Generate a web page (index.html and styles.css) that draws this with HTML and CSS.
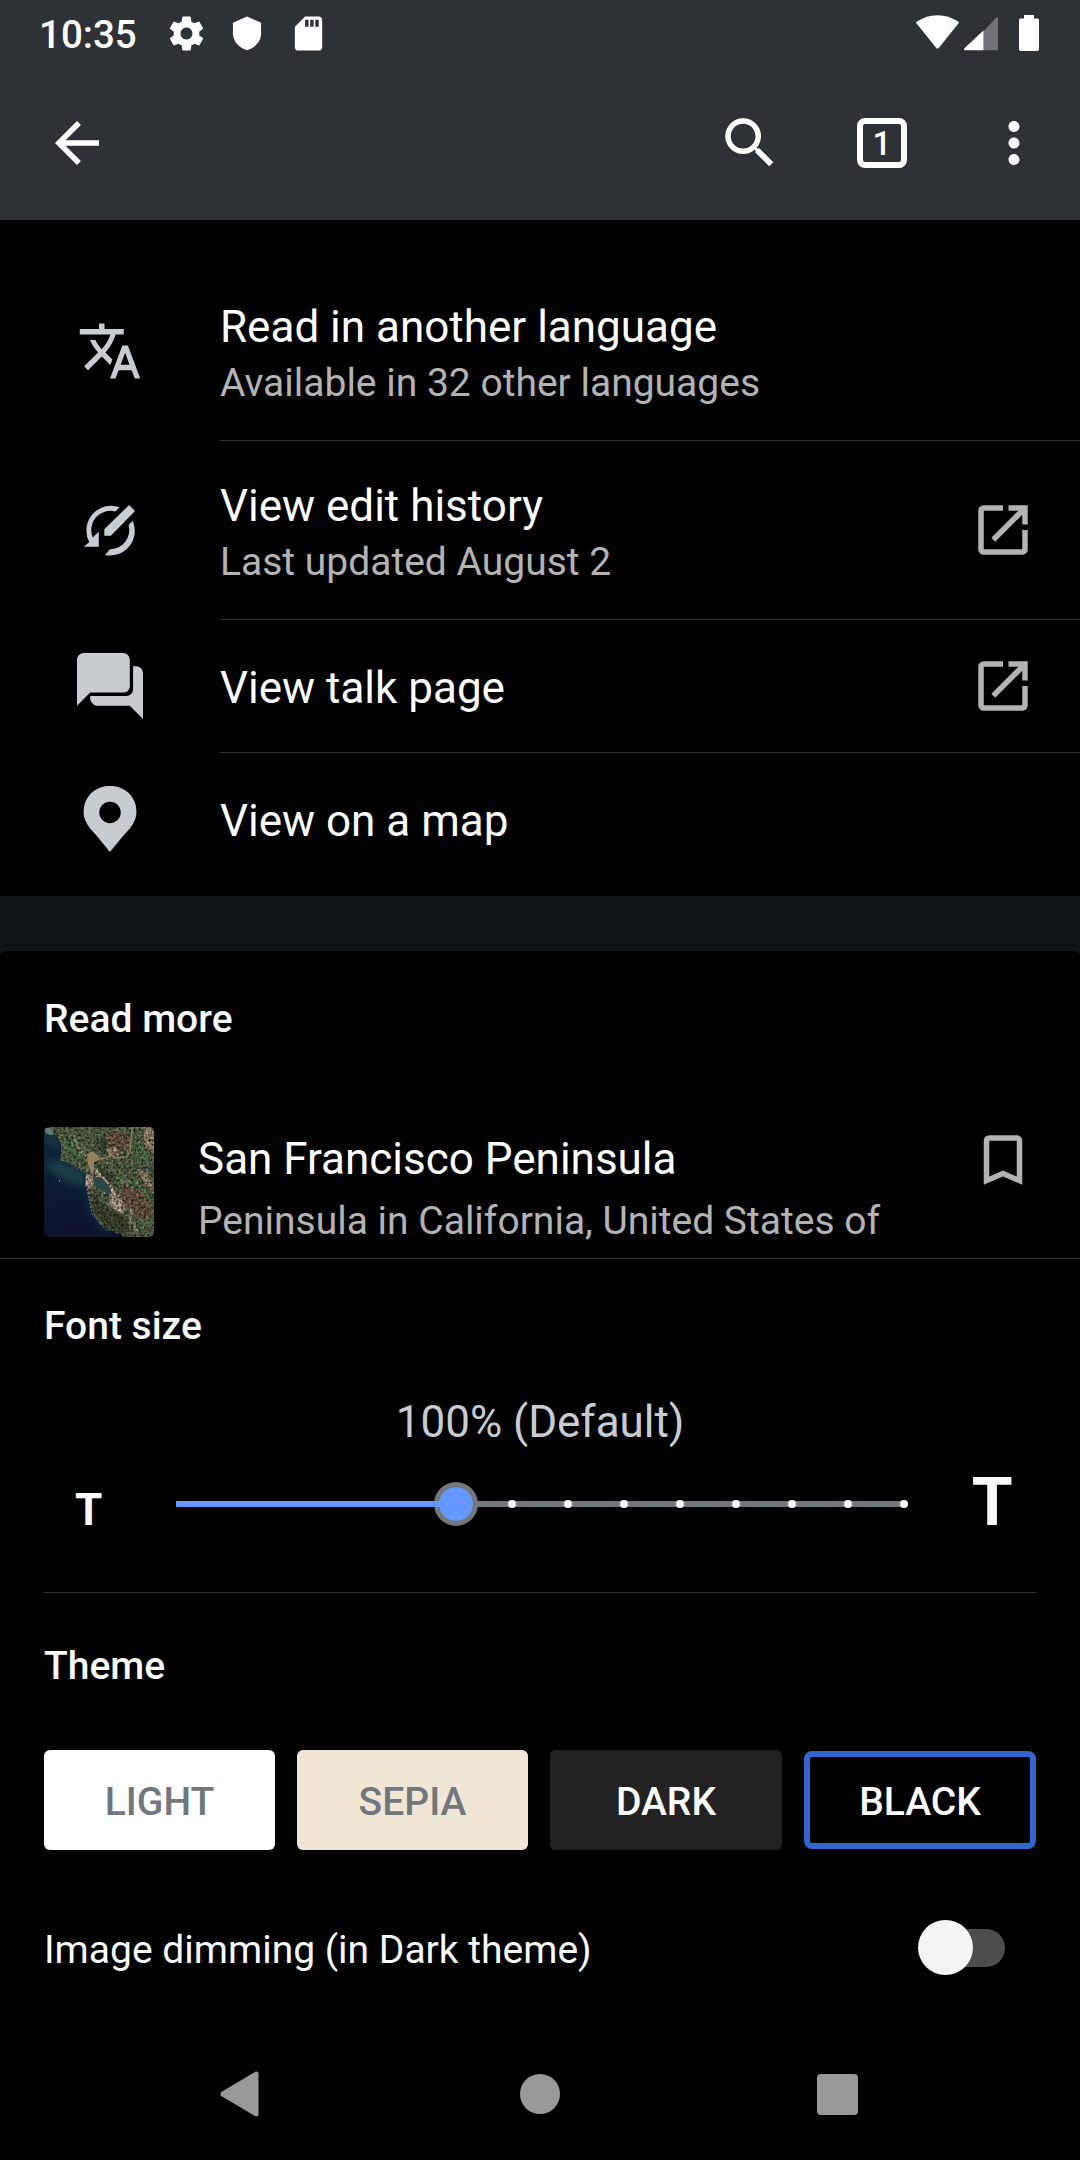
FILE: index.html
```html
<!DOCTYPE html>
<html lang="en">
<head>
<meta charset="utf-8">
<title>Article footer and theme settings</title>
<link rel="stylesheet" href="styles.css">
</head>
<body>
<div class="screen">
  <header class="top">
    <div class="status">
      <span class="clock">10:35</span>
      <svg class="st-gear" viewBox="0 0 24 24"><path d="M19.43 12.98c.04-.32.07-.64.07-.98s-.03-.66-.07-.98l2.11-1.65c.19-.15.24-.42.12-.64l-2-3.46c-.12-.22-.39-.3-.61-.22l-2.49 1c-.52-.4-1.08-.73-1.69-.98l-.38-2.65A.488.488 0 0 0 14 2h-4c-.25 0-.46.18-.49.42l-.38 2.65c-.61.25-1.17.59-1.69.98l-2.49-1c-.23-.09-.49 0-.61.22l-2 3.46c-.13.22-.07.49.12.64l2.11 1.65c-.04.32-.07.65-.07.98s.03.66.07.98l-2.11 1.65c-.19.15-.24.42-.12.64l2 3.46c.12.22.39.3.61.22l2.49-1c.52.4 1.08.73 1.69.98l.38 2.65c.03.24.24.42.49.42h4c.25 0 .46-.18.49-.42l.38-2.65c.61-.25 1.17-.59 1.69-.98l2.49 1c.23.09.49 0 .61-.22l2-3.46c.12-.22.07-.49-.12-.64l-2.11-1.65zM12 15.5c-1.93 0-3.5-1.57-3.5-3.5s1.57-3.500 3.500-3.500 3.500 1.570 3.500 3.500-1.570 3.500-3.500 3.500z"/></svg>
      <svg class="st-shield" viewBox="0 0 30 36"><path d="M15 0.500 29.500 7v11c0 8-6.500 15-14.500 17.200C7 33 .5 26 .5 18V7z"/></svg>
      <svg class="st-sd" viewBox="0 0 24 24"><path d="M18 2h-8L4.020 8 4 20c0 1.100.9 2 2 2h12c1.100 0 2-.9 2-2V4c0-1.100-.9-2-2-2zm-6 6h-2V4h2v4zm3 0h-2V4h2v4zm3 0h-2V4h2v4z"/></svg>
      <svg class="st-wifi" viewBox="0 0 43 34"><path d="M.8 8.800C.1 8.200.1 7.200.9 6.600 7 2.400 14 .2 21.500.2S36 2.400 42.100 6.600c.8.6.8 1.600.1 2.200L22.700 33c-.6.800-1.800.8-2.400 0z"/></svg>
      <svg class="st-cell" viewBox="0 0 34 34"><path d="M34 1.500V32c0 .8-.4 1.300-1.300 1.300H19.500V14.500L31.800 1c1-1 2.200-.7 2.200.5z" opacity=".32"/><path d="M19.500 13.500v19.800H1.200c-1.200 0-1.500-1.300-.8-2z"/></svg>
      <svg class="st-batt" viewBox="0 0 20 36"><path d="M5 0h10v3.500h3.300c1 0 1.700.7 1.700 1.700v29c0 1-.7 1.700-1.700 1.700H1.700C.7 35.900 0 35.200 0 34.200v-29c0-1 .7-1.700 1.700-1.700H5z"/></svg>
    </div>
    <div class="toolbar">
      <svg class="ic" viewBox="0 0 24 24"><path d="M20 11H7.830l5.590-5.590L12 4l-8 8 8 8 1.410-1.410L7.830 13H20v-2z"/></svg>
      <span class="grow"></span>
      <svg class="ic" viewBox="0 0 24 24"><path d="M15.500 14h-.79l-.28-.27A6.471 6.471 0 0 0 16 9.500 6.500 6.500 0 1 0 9.500 16c1.610 0 3.090-.59 4.230-1.570l.27.28v.79l5 4.990L20.490 19l-4.990-5zm-6 0C7.010 14 5 11.990 5 9.500S7.010 5 9.500 5 14 7.010 14 9.500 11.990 14 9.500 14z"/></svg>
      <span class="tabs">1</span>
      <svg class="ic" viewBox="0 0 24 24"><path d="M12 8c1.100 0 2-.9 2-2s-.9-2-2-2-2 .9-2 2 .9 2 2 2zm0 2c-1.100 0-2 .9-2 2s.9 2 2 2 2-.9 2-2-.9-2-2-2zm0 6c-1.100 0-2 .9-2 2s.9 2 2 2 2-.9 2-2-.9-2-2-2z"/></svg>
    </div>
  </header>

  <main class="article">
    <section class="menu">
      <div class="item">
        <svg class="ic lead" viewBox="0 0 24 24"><path d="M12.870 15.070l-2.540-2.510.03-.03A17.520 17.520 0 0 0 14.070 6H17V4h-7V2H8v2H1v1.990h11.170C11.500 7.920 10.440 9.750 9 11.350 8.070 10.320 7.300 9.190 6.690 8h-2c.73 1.630 1.730 3.170 2.980 4.560l-5.090 5.020L4 19l5-5 3.110 3.110.76-2.040zM18.500 10h-2L12 22h2l1.120-3h4.750L21 22h2l-4.500-12zm-2.620 7l1.620-4.330L19.120 17h-3.240z"/></svg>
        <div class="body"><div class="title">Read in another language</div><div class="sub">Available in 32 other languages</div></div>
      </div>
      <div class="item">
        <svg class="ic lead" viewBox="0 0 66 66"><path d="M42.500 10.300A24.700 24.700 0 0 0 12.200 45L7 49.800h14.800V34.500L15.800 40.400A19 19 0 0 1 38.400 14.600zM55.600 23.700A24.700 24.700 0 0 1 28 58l5-5.800A19.200 19.200 0 0 0 51.600 28zM27.300 38.700v-6.400L52.100 8l5.900 6-24.100 24.700z"/></svg>
        <div class="body"><div class="title">View edit history</div><div class="sub">Last updated August 2</div></div>
        <svg class="ic trail" viewBox="0 0 24 24"><path d="M19 19H5V5h7V3H5a2 2 0 0 0-2 2v14a2 2 0 0 0 2 2h14c1.100 0 2-.9 2-2v-7h-2v7zM14 3v2h3.590l-9.830 9.830 1.410 1.410L19 6.410V10h2V3h-7z"/></svg>
      </div>
      <div class="item single">
        <svg class="ic lead" viewBox="0 0 20 20"><path d="M2 0a2 2 0 0 0-2 2v14l4-4h10a2 2 0 0 0 2-2V2a2 2 0 0 0-2-2zM17 4v7a2 2 0 0 1-2 2H4a2.500 2.500 0 0 0 2 3h10l4 4V6a2 2 0 0 0-2-2z"/></svg>
        <div class="body"><div class="title">View talk page</div></div>
        <svg class="ic trail" viewBox="0 0 24 24"><path d="M19 19H5V5h7V3H5a2 2 0 0 0-2 2v14a2 2 0 0 0 2 2h14c1.100 0 2-.9 2-2v-7h-2v7zM14 3v2h3.590l-9.830 9.830 1.410 1.410L19 6.410V10h2V3h-7z"/></svg>
      </div>
      <div class="item single last">
        <svg class="ic lead" viewBox="0 0 20 20"><path d="M10 0a7.650 7.650 0 0 0-8 8c0 2.520 2 5 3 6s5 6 5 6 4-5 5-6 3-3.480 3-6a7.650 7.650 0 0 0-8-8zm0 11.250A3.250 3.250 0 1 1 13.250 8 3.250 3.250 0 0 1 10 11.250z"/></svg>
        <div class="body"><div class="title">View on a map</div></div>
      </div>
    </section>

    <section class="more">
      <h2 class="heading more-heading">Read more</h2>
      <div class="card">
        <svg class="thumb" viewBox="0 0 110 110">
          <defs>
            <filter id="grain" x="0" y="0" width="100%" height="100%" color-interpolation-filters="sRGB">
              <feTurbulence type="fractalNoise" baseFrequency=".4" numOctaves="3" seed="4" result="n"/>
              <feColorMatrix in="n" values="1.500 .1 0 0 -.3  1.500 .05 0 0 -.3  1.500 0 .1 0 -.33  0 0 0 0 1" result="g"/>
              <feComposite in="g" in2="SourceGraphic" operator="in" result="gg"/>
              <feComposite in="SourceGraphic" in2="gg" operator="arithmetic" k1="1.3" k2=".3"/>
            </filter>
            <filter id="soft"><feGaussianBlur stdDeviation="4"/></filter>
            <linearGradient id="sea" x1="0" y1="0" x2=".2" y2="1"><stop offset="0" stop-color="#10253a"/><stop offset=".45" stop-color="#0c1c30"/><stop offset="1" stop-color="#0d122b"/></linearGradient>
          </defs>
          <rect width="110" height="110" fill="url(#sea)"/>
          <g filter="url(#soft)"><path d="M0 34h18l24 11v14l-18-3L4 42z" fill="#1c4048"/><path d="M16 26l-7-20-9-6v10l8 7z" fill="#204048"/><path d="M42 60l7 28 14 18" fill="none" stroke="#1b414a" stroke-width="3"/></g>
          <path d="M0 1h8l3 6-5 1-4-2z" fill="#5c8079"/>
          <g filter="url(#grain)">
            <path d="M6 0l3 6 6 5 2 6 1 9-2 8 8 1 9 5 9 6-1 9 2 8 3 13 3 11 7 10 10 6 10 1 3 6h32V0z" fill="#4a5640"/>
            <path d="M16 10l18 3 6 18-8 4-12-12zM70 46l26 10 14 20v26L84 80zM88 10l18 8v20L92 34z" fill="#456040"/>
            <path d="M78 58l18 4 14 18v10L96 90 76 74zM70 4l16 4-4 16-14-2-10-12z" fill="#5c4c3c"/>
            <path d="M45 63l14 14 22 14 6 14-14 2-12-8-10-12z" fill="#363e2c"/>
            <path d="M52 36l16 12 8 14-20-12zM58 8l-8 12 12 8 2-14z" fill="#364332"/>
            <path d="M49 39l14 14 14 18 5 12-5 3-14-9 5-5-4-7-12-14zM42 47l6 2 2 8-4 5-5-3z" fill="#93877d"/>
            <path d="M94 42l8 4 8 16v6L98 52zM100 0h10v28l-10-10zM62 22l10-2 4 8-10 2z" fill="#80725e"/>
            <path d="M30 8l4 12 8 9M88 78l-2 16 8 10M76 56l10-2" fill="none" stroke="#83796b" stroke-width="2"/>
          </g>
          <path d="M49 50l7 0 9 8 3 9-7-1-9-6z" fill="#2b4842"/>
          <path d="M43 27l6-3 6 6 0 3-5 2 0 10-3 1-3-9z" fill="#93805f"/>
          <path d="M54 32l9-1 4-4 3 4 13-1 3-6 1-10 1-14" fill="none" stroke="#93805f" stroke-width="1.300"/>
          <path d="M14 10l4 8-1 15 7 2 17 11M43 62l5 25 14 16h12" fill="none" stroke="#789188" stroke-width=".8" stroke-dasharray="2 1.500"/>
          <path d="M15 54h1M60 66h1M99 100h1M95 52h1" stroke="#dce0d8"/>
        </svg>
        <div class="card-body"><div class="title">San Francisco Peninsula</div><div class="sub">Peninsula in California, United States of</div></div>
        <svg class="ic save" viewBox="0 0 24 24"><path d="M17 3H7a2 2 0 0 0-2 2v16l7-3 7 3V5c0-1.100-.9-2-2-2zm0 15l-5-2.180L7 18V5h10v13z"/></svg>
      </div>
    </section>
  </main>

  <section class="sheet">
    <h2 class="heading">Font size</h2>
    <div class="percent">100% (Default)</div>
    <div class="sizer">
      <span class="t-small">T</span>
      <svg class="slider" viewBox="0 0 740 44">
        <path d="M280 19h448v6H280z" fill="#72777d"/>
        <g fill="#fff"><circle cx="336" cy="22" r="4"/><circle cx="392" cy="22" r="4"/><circle cx="448" cy="22" r="4"/><circle cx="504" cy="22" r="4"/><circle cx="560" cy="22" r="4"/><circle cx="616" cy="22" r="4"/><circle cx="672" cy="22" r="4"/><circle cx="728" cy="22" r="4"/></g>
        <circle cx="280" cy="22" r="22" fill="#72777d"/><circle cx="280" cy="22" r="16.800" fill="#69f"/>
        <path d="M0 19h280v6H0z" fill="#69f"/>
      </svg>
      <span class="t-big">T</span>
    </div>
    <hr class="rule">
    <h2 class="heading theme-heading">Theme</h2>
    <div class="themes">
      <span class="theme light">LIGHT</span><span class="theme sepia">SEPIA</span><span class="theme dark">DARK</span><span class="theme black">BLACK</span>
    </div>
    <div class="dimming">
      <span class="dim-label">Image dimming (in Dark theme)</span>
      <span class="switch"><span class="knob"></span></span>
    </div>
  </section>

  <nav class="nav">
    <svg class="nav-back" viewBox="0 0 39 46"><path d="M35 .9c1.800-1 3.500-.2 3.500 1.800v40.600c0 2-1.700 2.800-3.500 1.800L1.700 25.200c-1.700-1-1.700-3.300 0-4.400z"/></svg>
    <span class="nav-home"></span>
    <span class="nav-recent"></span>
  </nav>
</div>
</body>
</html>
```
FILE: styles.css
```css
* { box-sizing: border-box; }

body {
  margin: 0;
  background: #000;
  color: #fff;
  font-family: Roboto, "Liberation Sans", sans-serif;
}

.screen {
  display: flex;
  flex-direction: column;
  width: 1080px;
  height: 2160px;
  overflow: hidden;
}

svg { display: block; flex: none; fill: currentColor; }
.ic { width: 66px; height: 66px; }
.grow { flex: 1; }

/* Status bar and toolbar */
.top { height: 220px; background: #2e3136; }

.status {
  display: flex;
  align-items: flex-start;
  height: 66px;
  padding: 15px 41px 0 39px;
}

.clock {
  width: 127px;
  margin-top: -3px;
  font-size: 38.5px;
  font-weight: 500;
  line-height: 46px;
}

.st-gear { width: 41px; height: 41px; margin-top: -2px; }
.st-shield { width: 30px; height: 35px; margin: 1px 0 0 25px; }
.st-sd { width: 41px; height: 41px; margin: -2px 0 0 26px; }
.st-wifi { width: 43px; height: 34px; margin-left: auto; }
.st-cell { width: 34px; height: 34px; margin: 2px 0 0 5px; }
.st-batt { width: 20px; height: 36px; margin-left: 21px; }

.toolbar {
  display: flex;
  align-items: center;
  height: 154px;
  padding: 0 33px 0 44px;
}

.tabs {
  width: 50px;
  height: 50px;
  margin: 0 74px;
  border: 6px solid #fff;
  border-radius: 8px;
  font-size: 33px;
  font-weight: 500;
  line-height: 40px;
  text-align: center;
}

/* Article footer menu */
.article { height: 1038px; background: #101418; overflow: hidden; }
.menu { height: 676px; padding-top: 42px; background: #000; }

.item {
  display: flex;
  align-items: center;
  height: 179px;
  padding-left: 77px;
}

.item .body {
  flex: 1;
  align-self: stretch;
  margin-left: 77px;
  padding-top: 39px;
  border-bottom: 1px solid #303030;
}

.item .trail {
  align-self: stretch;
  width: 110px;
  height: auto;
  padding: 0 44px 0 0;
  border-bottom: 1px solid #303030;
  color: #b3b3b3;
}

.single { height: 133px; }
.single .body { padding-top: 42px; }
.last .body { border-bottom: 0; }
.lead { margin-bottom: 1px; color: #c8ccd1; }
.title { font-size: 44px; line-height: 52px; white-space: nowrap; }
.sub { font-size: 39px; line-height: 61px; color: #b3b3b3; white-space: nowrap; }

/* Read more */
.more {
  height: 400px;
  margin-top: 55px;
  padding: 45px 44px 0;
  border-radius: 6px 6px 0 0;
  background: #000;
}

.heading {
  margin: 0;
  color: #f8f9fa;
  font-size: 39px;
  font-weight: 500;
  line-height: 46px;
}

.card { display: flex; margin-top: 85px; }
.thumb { width: 110px; height: 110px; border-radius: 5px; }
.card-body { flex: 1; margin-left: 44px; padding-top: 6px; }
.card-body .sub { line-height: 73px; }
.save { color: #b3b3b3; }

/* Font and theme sheet */
.sheet {
  height: 776px;
  padding: 44px 44px 0;
  border-top: 1px solid #303030;
}

.percent {
  margin-top: 47px;
  color: #c8ccd1;
  font-size: 44px;
  line-height: 52px;
  text-align: center;
}

.sizer {
  display: flex;
  align-items: flex-start;
  height: 144px;
  padding-top: 34px;
  color: #f8f9fa;
  font-weight: 700;
}

.t-small { width: 90px; margin-top: 2px; font-size: 44px; line-height: 52px; text-align: center; }
.slider { width: 740px; height: 44px; margin: 0 0 0 42px; }
.t-big { width: 88px; margin: -18px 0 0 33px; font-size: 66px; line-height: 78px; text-align: center; }
.rule { height: 1px; margin: 0; border: 0; background: #303030; }
.theme-heading { margin-top: 50px; }

.themes {
  display: grid;
  grid-template-columns: 231px 231px 232px 232px;
  align-items: center;
  gap: 22px;
  margin-top: 61px;
  height: 100px;
}

.theme {
  height: 100px;
  border-radius: 6px;
  font-size: 39px;
  font-weight: 500;
  line-height: 104px;
  text-align: center;
}

.light { background: #fff; color: #72777d; }
.sepia { background: #f0e6d6; color: #72777d; }
.dark { background: #222; }
.black { height: 98px; border: 6px solid #36c; border-radius: 8px; line-height: 90px; }

.dimming {
  display: flex;
  align-items: center;
  justify-content: space-between;
  margin-top: 69px;
  padding-right: 31px;
}

.dim-label { padding-top: 5px; color: #f8f9fa; font-size: 39px; line-height: 52px; }
.switch { display: flex; align-items: center; width: 83px; height: 38px; border-radius: 19px; background: #4d4d4d; }
.knob { flex: none; width: 55px; height: 55px; margin-left: -4px; border-radius: 50%; background: #f3f4f6; }

/* System navigation */
.nav {
  display: grid;
  grid-template-columns: 277px 40px 1fr;
  align-items: center;
  height: 126px;
  padding: 0 222px 6px 220px;
  column-gap: 23px;
  justify-items: end;
  color: #999;
}

.nav-back { width: 39px; height: 46px; justify-self: start; }
.nav-home { width: 40px; height: 40px; border-radius: 50%; background: #999; }
.nav-recent { width: 41px; height: 41px; border-radius: 4px; background: #999; }
```
